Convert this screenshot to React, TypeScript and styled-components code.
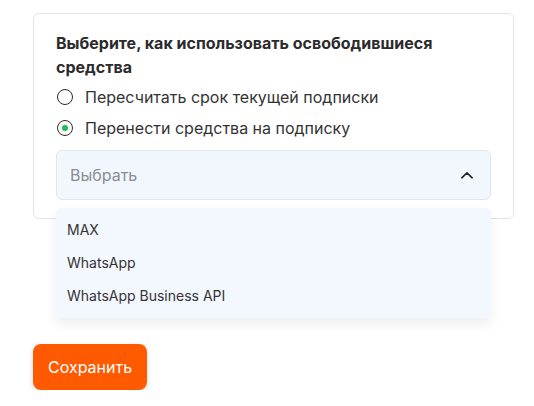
import * as React from 'react';
import styled, { createGlobalStyle } from 'styled-components';

const GlobalStyle = createGlobalStyle`
    body {
        margin: 0;
        font-family: Inter, "Noto Sans", sans-serif;
        color: #222;
        background: #fff;
    }
`;

const Page = styled.div`
    padding: 13px 20px 0 33px;
    display: flex;
    flex-direction: column;
    align-items: flex-start;
`;

const Card = styled.div`
    box-sizing: border-box;
    width: 481px;
    border: 1px solid #e2e4e8;
    border-radius: 6px;
    padding: 17px 22px 18px;
    display: flex;
    flex-direction: column;
`;

const Title = styled.div`
    font-size: 16px;
    line-height: 24px;
    font-weight: 700;
    color: #2b2b2b;
    margin-bottom: 6px;
`;

const RadioRow = styled.label`
    display: flex;
    align-items: center;
    gap: 12px;
    height: 24px;
    font-size: 16px;
    color: #333;
    & + & {
        margin-top: 7px;
    }
`;

const RadioCircle = styled.span<{ $checked?: boolean }>`
    box-sizing: border-box;
    width: 16px;
    height: 16px;
    border-radius: 50%;
    border: 1.5px solid #2a2a2a;
    display: flex;
    align-items: center;
    justify-content: center;
    margin-left: 1px;

    &:after {
        content: "";
        width: 6px;
        height: 6px;
        border-radius: 50%;
        background: #17c05a;
        display: ${(p) => (p.$checked ? 'block' : 'none')};
    }
`;

const SelectWrap = styled.div`
    position: relative;
    margin-top: 10px;
`;

const SelectBox = styled.div`
    box-sizing: border-box;
    height: 50px;
    background: #f2f6fd;
    border: 1px solid #e1e6ee;
    border-radius: 6px;
    display: flex;
    align-items: center;
    justify-content: space-between;
    padding: 0 16px 0 13px;
    font-size: 16px;
    color: #8a8d93;
`;

const Menu = styled.ul`
    position: absolute;
    top: 58px;
    left: 0;
    right: 0;
    margin: 0;
    padding: 5px 0 6px;
    list-style: none;
    background: #f3f7fe;
    border-radius: 5px;
    box-shadow: 0 6px 12px rgba(30, 40, 70, 0.08);
    z-index: 2;
`;

const Item = styled.li`
    height: 33px;
    display: flex;
    align-items: center;
    padding: 0 11px;
    font-size: 14px;
    color: #333;
`;

const SaveButton = styled.button`
    margin-top: 125px;
    height: 46px;
    padding: 0 15px;
    border: none;
    border-radius: 8px;
    background: #ff5a00;
    color: #fff;
    font-family: inherit;
    font-size: 16px;
    box-shadow: 0 3px 6px rgba(0, 0, 0, 0.15);
    cursor: pointer;
`;

const Chevron = () => (
    <svg width="14" height="14" viewBox="0 0 14 14" fill="none">
        <path d="M1.8 9.8L7 4.8l5.2 5" stroke="#222" strokeWidth="1.6" strokeLinecap="round" strokeLinejoin="round" />
    </svg>
);

const options = ['MAX', 'WhatsApp', 'WhatsApp Business API'];

export default function App() {
    return (
        <Page>
            <GlobalStyle />
            <Card>
                <Title>Выберите, как использовать освободившиеся средства</Title>
                <RadioRow>
                    <RadioCircle />
                    Пересчитать срок текущей подписки
                </RadioRow>
                <RadioRow>
                    <RadioCircle $checked />
                    Перенести средства на подписку
                </RadioRow>
                <SelectWrap>
                    <SelectBox>
                        Выбрать
                        <Chevron />
                    </SelectBox>
                    <Menu>
                        {options.map((o) => (
                            <Item key={o}>{o}</Item>
                        ))}
                    </Menu>
                </SelectWrap>
            </Card>
            <SaveButton>Сохранить</SaveButton>
        </Page>
    );
}
